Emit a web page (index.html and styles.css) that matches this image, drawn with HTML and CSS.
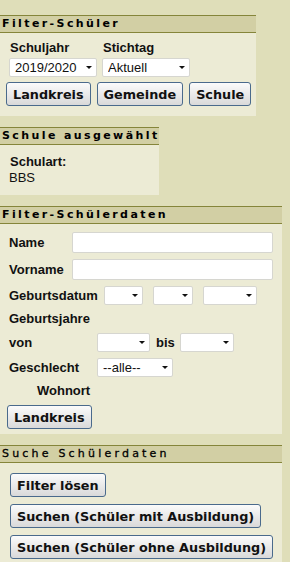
FILE: index.html
```html
<!DOCTYPE html>
<html lang="de">
<head>
<meta charset="UTF-8">
<meta name="viewport" content="width=device-width, initial-scale=1.0">
<title>Filter Schüler</title>
<link rel="stylesheet" href="styles.css">
</head>
<body>
<div class="sidebar">

    <div class="box box-school-filter">
        <div class="box-title">Filter-Schüler</div>
        <div class="box-body">
            <div class="pick-row">
                <div class="pick">
                    <label for="schuljahr">Schuljahr</label>
                    <span class="sel"><select id="schuljahr" class="w88"><option>2019/2020</option></select></span>
                </div>
                <div class="pick">
                    <label for="stichtag">Stichtag</label>
                    <span class="sel"><select id="stichtag" class="w88"><option>Aktuell</option></select></span>
                </div>
            </div>
            <div class="btn-row">
                <button>Landkreis</button>
                <button>Gemeinde</button>
                <button>Schule</button>
            </div>
        </div>
    </div>

    <div class="box box-selected">
        <div class="box-title">Schule ausgewählt</div>
        <div class="box-body">
            <div class="field-label">Schulart:</div>
            <div class="field-value">BBS</div>
        </div>
    </div>

    <div class="box box-wide">
        <div class="box-title">Filter-Schülerdaten</div>
        <div class="box-body form-rows">
            <div class="row">
                <label class="lbl lbl-short" for="name">Name</label>
                <input type="text" id="name">
            </div>
            <div class="row">
                <label class="lbl lbl-short" for="vorname">Vorname</label>
                <input type="text" id="vorname">
            </div>
            <div class="row date-row">
                <span class="lbl">Geburtsdatum</span>
                <span class="sel"><select class="w39"><option></option></select></span>
                <span class="sel"><select class="w40"><option></option></select></span>
                <span class="sel"><select class="w54"><option></option></select></span>
            </div>
            <div class="row">
                <span class="lbl">Geburtsjahre</span>
            </div>
            <div class="row">
                <span class="lbl lbl-mid">von</span>
                <span class="sel"><select class="w53"><option></option></select></span>
                <span class="lbl bis">bis</span>
                <span class="sel"><select class="w54"><option></option></select></span>
            </div>
            <div class="row">
                <span class="lbl lbl-mid">Geschlecht</span>
                <span class="sel"><select class="w76"><option>--alle--</option></select></span>
            </div>
            <div class="row">
                <span class="lbl wohnort">Wohnort</span>
            </div>
            <div class="row">
                <button class="btn-left">Landkreis</button>
            </div>
        </div>
    </div>

    <div class="box box-wide">
        <div class="box-title plain">Suche Schülerdaten</div>
        <div class="box-body search-btns">
            <button>Filter lösen</button>
            <button>Suchen (Schüler mit Ausbildung)</button>
            <button>Suchen (Schüler ohne Ausbildung)</button>
        </div>
    </div>

</div>
</body>
</html>
```

FILE: styles.css
```css
body {
    margin: 0;
    background: #dfdeb9;
    font-family: "Liberation Sans", Arial, sans-serif;
    font-size: 13px;
    color: #111;
}

.sidebar {
    padding-top: 15px;
}

.box {
    background: #ecebd5;
    margin-bottom: 11px;
}
.box-school-filter { width: 256px; }
.box-selected { width: 159px; }
.box-wide { width: 282px; }

.box-title {
    height: 16px;
    line-height: 16px;
    padding-left: 2px;
    border-top: 1px solid #85853a;
    border-bottom: 1px solid #85853a;
    background: #d2cfa4;
    font-family: "DejaVu Sans", Verdana, sans-serif;
    font-size: 11px;
    font-weight: bold;
    letter-spacing: 2.4px;
    color: #000;
    white-space: nowrap;
}
.box-title.plain {
    font-weight: normal;
    letter-spacing: 3.2px;
    -webkit-text-stroke: 0.3px #000;
}

/* Filter-Schüler */
.box-school-filter .box-body {
    padding: 7px 0 10px 6px;
}
.pick-row {
    display: flex;
    gap: 5px;
    padding-left: 3px;
}
.pick label {
    display: block;
    font-weight: bold;
    line-height: 16px;
    padding-left: 1px;
    margin-bottom: 2px;
}
.btn-row {
    display: flex;
    gap: 6px;
    margin-top: 5px;
}

/* selects with own arrow */
.sel {
    position: relative;
    display: inline-block;
}
.sel select {
    display: block;
    box-sizing: border-box;
    -webkit-appearance: none;
    appearance: none;
    height: 19px;
    margin: 0;
    padding: 0 0 0 5px;
    border: 1px solid #d6d6d0;
    border-radius: 2px;
    background: #fff;
    font-family: "Liberation Sans", Arial, sans-serif;
    font-size: 13px;
    color: #111;
}
.sel::after {
    content: "";
    position: absolute;
    right: 5px;
    top: 8px;
    border-left: 3px solid transparent;
    border-right: 3px solid transparent;
    border-top: 3px solid #111;
    pointer-events: none;
}
.w39 { width: 39px; }
.w40 { width: 40px; }
.w53 { width: 53px; }
.w54 { width: 54px; }
.w76 { width: 76px; }
.w88 { width: 88px; }

button {
    box-sizing: border-box;
    height: 24px;
    padding: 0 6px;
    border: 1px solid #4a6a8c;
    border-radius: 3px;
    background: linear-gradient(#fbfbfb, #d9d9d9);
    font-family: "DejaVu Sans", Verdana, sans-serif;
    font-size: 12.8px;
    font-weight: bold;
    color: #111;
    white-space: nowrap;
    cursor: pointer;
}

/* Schule ausgewählt */
.box-selected .box-body {
    padding: 9px 0 9px 9px;
    line-height: 16px;
}
.field-label {
    font-weight: bold;
    padding-left: 1px;
}

/* Filter-Schülerdaten */
.form-rows {
    display: flex;
    flex-direction: column;
    gap: 6px;
    padding: 8px 0 5px 9px;
}
.row {
    display: flex;
    align-items: center;
}
.lbl {
    font-weight: bold;
    line-height: 16px;
    white-space: nowrap;
}
.lbl-short { width: 63px; }
.lbl-mid { width: 88px; }
.date-row .lbl { width: 95px; }
.date-row .sel + .sel { margin-left: 10px; }
.bis { margin: 0 5px 0 6px; }
.wohnort { padding-left: 28px; }
.btn-left { margin-left: -2px; }

input[type="text"] {
    box-sizing: border-box;
    width: 201px;
    height: 21px;
    margin: 0;
    border: 1px solid #d6d6d0;
    border-radius: 2px;
    background: #fff;
}

/* Suche Schülerdaten */
.search-btns {
    display: flex;
    flex-direction: column;
    align-items: flex-start;
    gap: 7px;
    padding: 10px 0 10px 10px;
}
```
